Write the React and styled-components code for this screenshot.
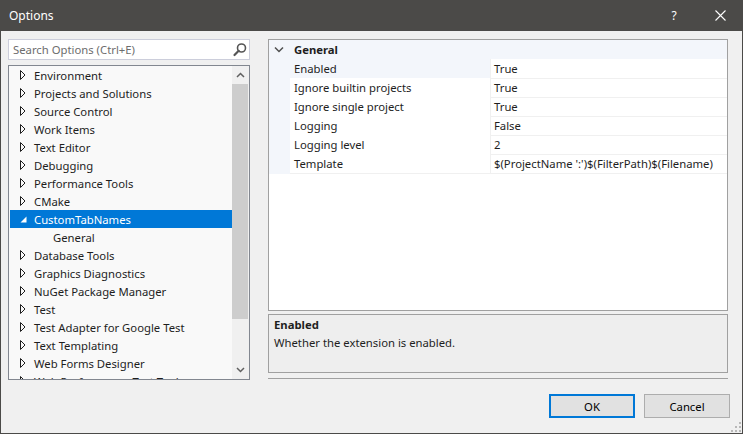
import React from 'react';
import styled, { createGlobalStyle } from 'styled-components';

const Global = createGlobalStyle`
  html, body { margin: 0; padding: 0; background: #f0f0f0; }
  * { box-sizing: border-box; }
`;

const Window = styled.div`
  width: 743px;
  height: 434px;
  display: flex;
  flex-direction: column;
  background: #f0f0f0;
  font-family: "Noto Sans", "Liberation Sans", sans-serif;
  font-size: 11.3px;
  color: #1e1e1e;
  position: relative;
  overflow: hidden;
`;

const TitleBar = styled.div`
  height: 31px;
  flex: none;
  background: #4b4a48;
  display: flex;
  align-items: center;
  padding-left: 9px;
  color: #ffffff;
  font-size: 12px;
`;

const TitleText = styled.span`
  flex: 1;
`;

const TitleButton = styled.div`
  width: 46px;
  height: 31px;
  display: flex;
  align-items: center;
  justify-content: center;
  color: #fff;
  font-size: 12px;
`;

const Body = styled.div`
  flex: 1;
  display: flex;
  flex-direction: column;
  border: 1px solid #4b4a48;
  border-top: none;
  padding: 8px 0 0 7px;
`;

const Main = styled.div`
  display: flex;
  gap: 18px;
  height: 341px;
`;

const LeftCol = styled.div`
  width: 242px;
  display: flex;
  flex-direction: column;
  gap: 5px;
`;

const Search = styled.div`
  height: 21px;
  border: 1px solid #cccedb;
  background: #ffffff;
  display: flex;
  align-items: center;
  padding: 0 1px 0 4px;
  color: #6d6d6d;
`;

const SearchText = styled.span`
  flex: 1;
`;

const Tree = styled.div`
  height: 315px;
  border: 1px solid #828790;
  background: #f9f9f9;
  display: flex;
`;

const TreeList = styled.div`
  flex: 1;
  overflow: hidden;
  padding: 0 0 0 1px;
`;

const TreeRow = styled.div`
  height: 18px;
  display: flex;
  align-items: center;
  padding-left: ${p => p.$indent}px;
  background: ${p => (p.$selected ? '#0078d7' : 'transparent')};
  color: ${p => (p.$selected ? '#ffffff' : '#1e1e1e')};
  white-space: nowrap;
`;

const Expander = styled.span`
  width: 14px;
  height: 18px;
  flex: none;
  display: flex;
  align-items: center;
`;

const ScrollBar = styled.div`
  width: 17px;
  flex: none;
  display: flex;
  flex-direction: column;
  background: #f0f0f0;
`;

const ScrollArrow = styled.div`
  height: 18px;
  display: flex;
  align-items: center;
  justify-content: center;
`;

const ScrollTrack = styled.div`
  flex: 1;
  padding: 0 1px 0 0;
`;

const Thumb = styled.div`
  height: 235px;
  background: #cdcdcd;
`;

const RightCol = styled.div`
  width: 460px;
  display: flex;
  flex-direction: column;
`;

const PropGrid = styled.div`
  height: 272px;
  border: 1px solid #a0a0a0;
  background: #ffffff;
`;

const CategoryRow = styled.div`
  height: 19px;
  background: #f3f6fb;
  display: flex;
  align-items: center;
  font-weight: bold;
`;

const CategoryChevron = styled.span`
  width: 25px;
  padding-left: 5px;
  display: flex;
  align-items: center;
`;

const PropRow = styled.div`
  display: grid;
  grid-template-columns: 21px 200px 1fr;
  height: 19px;
`;

const Gutter = styled.div`
  background: #f3f6fb;
`;

const NameCell = styled.div`
  padding-left: 4px;
  line-height: 19px;
  border-bottom: 1px solid #f0f0f0;
  background: ${p => (p.$active ? '#f3f6fb' : '#ffffff')};
  white-space: nowrap;
`;

const ValueCell = styled.div`
  padding-left: 3px;
  line-height: 19px;
  border-bottom: 1px solid #f0f0f0;
  border-left: 1px solid #f0f0f0;
  white-space: nowrap;
  overflow: hidden;
`;

const Description = styled.div`
  margin-top: 3px;
  height: 59px;
  border: 1px solid #a0a0a0;
  background: #eeeeee;
  padding: 1px 5px;
  line-height: 18px;
`;

const DescTitle = styled.div`
  font-weight: bold;
`;

const Separator = styled.div`
  margin-top: 5px;
  height: 1px;
  background: #a0a0a0;
`;

const Footer = styled.div`
  display: flex;
  justify-content: flex-end;
  gap: 9px;
  padding: 14px 12px 0 0;
`;

const Button = styled.div`
  width: 86px;
  height: 24px;
  display: flex;
  align-items: center;
  justify-content: center;
  background: #e1e1e1;
  border: ${p => (p.$default ? '2px solid #0078d7' : '1px solid #adadad')};
  color: #000;
`;

const Grip = styled.svg`
  position: absolute;
  right: 2px;
  bottom: 2px;
`;

const treeItems = [
  { label: 'Environment' },
  { label: 'Projects and Solutions' },
  { label: 'Source Control' },
  { label: 'Work Items' },
  { label: 'Text Editor' },
  { label: 'Debugging' },
  { label: 'Performance Tools' },
  { label: 'CMake' },
  { label: 'CustomTabNames', expanded: true, selected: true },
  { label: 'General', child: true },
  { label: 'Database Tools' },
  { label: 'Graphics Diagnostics' },
  { label: 'NuGet Package Manager' },
  { label: 'Test' },
  { label: 'Test Adapter for Google Test' },
  { label: 'Text Templating' },
  { label: 'Web Forms Designer' },
  { label: 'Web Performance Test Tools' },
];

const props = [
  ['Enabled', 'True'],
  ['Ignore builtin projects', 'True'],
  ['Ignore single project', 'True'],
  ['Logging', 'False'],
  ['Logging level', '2'],
  ['Template', "$(ProjectName ':')$(FilterPath)$(Filename)"],
];

const Collapsed = () => (
  <svg width="6" height="10" viewBox="0 0 6 10">
    <path d="M0.5 0.5 L5 5 L0.5 9.5 Z" fill="none" stroke="#1e1e1e" strokeWidth="1" />
  </svg>
);

const Expanded = () => (
  <svg width="7" height="10" viewBox="0 0 7 10">
    <path d="M6.5 2.5 L6.5 8.5 L0.5 8.5 Z" fill="#ffffff" />
  </svg>
);

export default function App() {
  return (
    <Window>
      <Global />
      <TitleBar>
        <TitleText>Options</TitleText>
        <TitleButton>?</TitleButton>
        <TitleButton>
          <svg width="11" height="11" viewBox="0 0 11 11">
            <path d="M0.5 0.5 L10.5 10.5 M10.5 0.5 L0.5 10.5" stroke="#fff" strokeWidth="1.1" />
          </svg>
        </TitleButton>
      </TitleBar>
      <Body>
        <Main>
          <LeftCol>
            <Search>
              <SearchText>Search Options (Ctrl+E)</SearchText>
              <svg width="16" height="16" viewBox="0 0 16 16">
                <circle cx="9.5" cy="6" r="4" fill="none" stroke="#555" strokeWidth="1.6" />
                <path d="M6.7 8.8 L2.5 13" stroke="#555" strokeWidth="2.2" strokeLinecap="round" />
              </svg>
            </Search>
            <Tree>
              <TreeList>
                {treeItems.map(it => (
                  <TreeRow
                    key={it.label}
                    $indent={it.child ? 43 : 10}
                    $selected={it.selected}
                  >
                    {!it.child && (
                      <Expander>{it.expanded ? <Expanded /> : <Collapsed />}</Expander>
                    )}
                    {it.label}
                  </TreeRow>
                ))}
              </TreeList>
              <ScrollBar>
                <ScrollArrow>
                  <svg width="9" height="6" viewBox="0 0 9 6">
                    <path d="M1 5 L4.5 1.5 L8 5" fill="none" stroke="#606060" strokeWidth="1.5" />
                  </svg>
                </ScrollArrow>
                <ScrollTrack>
                  <Thumb />
                </ScrollTrack>
                <ScrollArrow>
                  <svg width="9" height="6" viewBox="0 0 9 6">
                    <path d="M1 1 L4.5 4.5 L8 1" fill="none" stroke="#606060" strokeWidth="1.5" />
                  </svg>
                </ScrollArrow>
              </ScrollBar>
            </Tree>
          </LeftCol>
          <RightCol>
            <PropGrid>
              <CategoryRow>
                <CategoryChevron>
                  <svg width="10" height="7" viewBox="0 0 10 7">
                    <path d="M1 1.5 L5 5.5 L9 1.5" fill="none" stroke="#505050" strokeWidth="1.5" />
                  </svg>
                </CategoryChevron>
                General
              </CategoryRow>
              {props.map(([name, value], i) => (
                <PropRow key={name}>
                  <Gutter />
                  <NameCell $active={i === 0}>{name}</NameCell>
                  <ValueCell>{value}</ValueCell>
                </PropRow>
              ))}
            </PropGrid>
            <Description>
              <DescTitle>Enabled</DescTitle>
              <div>Whether the extension is enabled.</div>
            </Description>
            <Separator />
          </RightCol>
        </Main>
        <Footer>
          <Button $default>OK</Button>
          <Button>Cancel</Button>
        </Footer>
      </Body>
      <Grip width="11" height="11" viewBox="0 0 11 11">
        {[[9, 1], [9, 5], [5, 5], [9, 9], [5, 9], [1, 9]].map(([x, y]) => (
          <rect key={`${x}-${y}`} x={x} y={y} width="2" height="2" fill="#b8b8b8" />
        ))}
      </Grip>
    </Window>
  );
}
